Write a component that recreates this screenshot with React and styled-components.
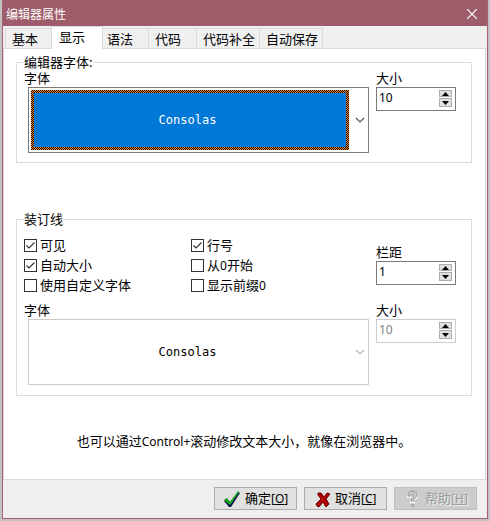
import React, { useId, useState } from "react";
import styled, { createGlobalStyle, css } from "styled-components";

const GlobalStyle = createGlobalStyle`
  * { box-sizing: border-box; }
  body {
    margin: 0;
    background: #c2c2c2;
    color: #000;
    font: 13px/16px "Noto Sans CJK SC", sans-serif;
  }
  button, input, select { font: inherit; color: inherit; }
`;

const Dialog = styled.main`
  display: flex;
  flex-direction: column;
  min-height: calc(100vh - 2px);
  margin: 0 2px 2px;
  border: 1px solid #a8606e;
  border-top-color: #a4606e;
  background: #efefef;
`;

const TitleBar = styled.header`
  display: flex;
  align-items: center;
  justify-content: space-between;
  height: 25px;
  padding-left: 3px;
  background: #9e5c6a;
  color: #fff;
`;

const Title = styled.h1`
  margin: 0;
  font-size: 12px;
  font-weight: 400;
`;

const CloseButton = styled.button`
  display: grid;
  place-items: center;
  width: 30px;
  height: 24px;
  padding: 0;
  border: 0;
  background: none;
`;

const TabList = styled.div`
  display: flex;
  align-items: flex-end;
  height: 22px;
  padding-left: 2px;
`;

const Tab = styled.button`
  height: 20px;
  min-width: 48px;
  padding: 0 4px 0 6px;
  border: 1px solid #dadada;
  border-width: 1px 0 0 1px;
  background: #f0f0f0;
  text-align: left;
  line-height: 18px;
  white-space: nowrap;
  &:last-child { border-right-width: 1px; }
  ${(p) => p.$active && css`
    z-index: 1;
    height: 23px;
    min-width: 52px;
    margin: 0 -3px -1px -2px;
    padding-left: 7px;
    padding-bottom: 3px;
    border-right-width: 1px;
    background: #fff;
  `}
`;

const Panel = styled.section`
  flex: 1;
  margin-right: 1px;
  padding: 5px 13px 16px 12px;
  border: 1px solid #dadada;
  background: #fff;
`;

const Group = styled.fieldset`
  min-width: 0;
  margin: 0 0 ${(p) => p.$after || 0}px;
  padding: ${(p) => p.$top || 0}px 15px ${(p) => p.$bottom}px 7px;
  border: 1px solid #dcdcdc;
`;

const Legend = styled.legend`
  padding: 0;
  height: 16px;
`;

const Columns = styled.div`
  display: grid;
  grid-template-columns: minmax(0, 1fr) 80px;
  gap: 7px;
`;

const Field = styled.div`
  padding-top: ${(p) => p.$top || 0}px;
`;

const FieldLabel = styled.label`
  display: block;
  margin-bottom: 1px;
`;

const Combo = styled.div`
  display: flex;
  height: 66px;
  margin-left: 4px;
  padding: 2px 0 2px 2px;
  border: 1px solid ${(p) => (p.$off ? "#ccc" : "#7a7a7a")};
  background: #fff;
  color: ${(p) => (p.$off ? "#b8b8b8" : "#555")};
`;

const ComboSelect = styled.select`
  appearance: none;
  flex: 1;
  min-width: 0;
  padding: 0 5px 0 0;
  border: 3px solid transparent;
  border-radius: 0;
  outline: 0;
  color: #fff;
  font: 12px/16px "DejaVu Sans Mono", monospace;
  text-align: center;
  text-align-last: center;
  background:
    linear-gradient(#0078d7, #0078d7) padding-box,
    repeating-conic-gradient(#000 0 25%, #ff8728 0 50%) 0 0 / 2px 2px border-box;
  &:disabled {
    background: #fff;
    color: #000;
    opacity: 1;
  }
`;

const ComboArrow = styled.svg`
  flex: none;
  align-self: center;
  width: 19px;
  height: 8px;
`;

const SpinBox = styled.div`
  display: flex;
  height: 24px;
  padding: 2px 3px 2px 2px;
  border: 1px solid ${(p) => (p.$off ? "#ccc" : "#7a7a7a")};
  background: #fff;
`;

const SpinInput = styled.input`
  flex: 1;
  min-width: 0;
  height: 16px;
  padding: 0;
  border: 0;
  outline: 0;
  background: none;
  font: 12px/16px "Noto Sans", sans-serif;
  &:disabled { color: #808080; }
`;

const SpinButtons = styled.div`
  display: grid;
  grid-template-rows: 7px 9px;
  gap: 1px;
  width: 13px;
`;

const SpinButton = styled.button`
  display: grid;
  place-items: center;
  padding: 0;
  border: 1px solid #adadad;
  background: #e1e1e1;
`;

const CheckGrid = styled.div`
  display: grid;
  grid-template-columns: 167px 1fr;
  grid-auto-rows: 20px;
`;

const CheckLabel = styled.label`
  display: flex;
  align-items: center;
  gap: 3px;
`;

const CheckBox = styled.input`
  appearance: none;
  width: 13px;
  height: 13px;
  margin: 0;
  border: 1px solid #333;
  background: #fff;
  &:checked {
    background: #fff url("data:image/svg+xml,%3Csvg xmlns='http://www.w3.org/2000/svg' viewBox='0 0 11 11'%3E%3Cpath d='M1.5 5.5 4 8 9.5 2.5' fill='none' stroke='%23333' stroke-width='1.2'/%3E%3C/svg%3E");
  }
`;

const Latin = styled.span`
  font: 12px/16px "Noto Sans", sans-serif;
`;

const Hint = styled.p`
  margin: 0;
  text-align: center;
`;

const Footer = styled.footer`
  display: flex;
  justify-content: flex-end;
  gap: 7px;
  padding: 7px 10px 8px;
`;

const ActionButton = styled.button`
  display: flex;
  align-items: center;
  gap: 4px;
  width: 83px;
  height: 23px;
  padding: 0 0 0 8px;
  border: 1px solid #adadad;
  background: #e1e1e1;
  white-space: nowrap;
  &:disabled {
    border-color: #bfbfbf;
    background: #ccc;
    color: #9a9a9a;
    text-shadow: 1px 1px #eee;
  }
`;

const ActionIcon = styled.svg`
  flex: none;
  width: 18px;
  height: 18px;
`;

function FontCombo({ id, disabled }) {
  return (
    <Combo $off={disabled}>
      <ComboSelect id={id} disabled={disabled} defaultValue="Consolas">
        <option>Consolas</option>
      </ComboSelect>
      <ComboArrow viewBox="0 0 19 8" aria-hidden="true">
        <path d="M7 2l4 4 4-4" fill="none" stroke="currentColor" strokeWidth="1.2" />
      </ComboArrow>
    </Combo>
  );
}

function FontField({ disabled }) {
  const id = useId();
  return (
    <Field>
      <FieldLabel htmlFor={id}>字体</FieldLabel>
      <FontCombo id={id} disabled={disabled} />
    </Field>
  );
}

function SpinField({ label, initial, disabled, top }) {
  const id = useId();
  const [value, setValue] = useState(initial);
  const step = (n) => setValue((v) => Math.max(0, Number(v) + n));
  return (
    <Field $top={top}>
      <FieldLabel htmlFor={id}>{label}</FieldLabel>
      <SpinBox $off={disabled}>
        <SpinInput id={id} value={value} disabled={disabled} onChange={(e) => setValue(e.target.value)} />
        <SpinButtons>
          <SpinButton type="button" aria-label="增加" disabled={disabled} onClick={() => step(1)}>
            <svg width="7" height="4" viewBox="0 0 7 4"><path d="M0 4 3.5 0 7 4z" /></svg>
          </SpinButton>
          <SpinButton type="button" aria-label="减少" disabled={disabled} onClick={() => step(-1)}>
            <svg width="7" height="4" viewBox="0 0 7 4"><path d="M0 0 3.5 4 7 0z" /></svg>
          </SpinButton>
        </SpinButtons>
      </SpinBox>
    </Field>
  );
}

function Check({ checked, children }) {
  return (
    <CheckLabel>
      <CheckBox type="checkbox" defaultChecked={checked} />
      <span>{children}</span>
    </CheckLabel>
  );
}

function Shortcut({ letter }) {
  return <Latin>[<u>{letter}</u>]</Latin>;
}

const tabs = ["基本", "显示", "语法", "代码", "代码补全", "自动保存"];

export default function App() {
  const [active, setActive] = useState("显示");
  return (
    <>
      <GlobalStyle />
      <Dialog>
        <TitleBar>
          <Title>编辑器属性</Title>
          <CloseButton type="button" aria-label="关闭">
            <svg width="10" height="10" viewBox="0 0 10 10">
              <path d="M0 0l10 10M10 0L0 10" stroke="#fff" strokeWidth="1.2" />
            </svg>
          </CloseButton>
        </TitleBar>
        <TabList role="tablist">
          {tabs.map((t) => (
            <Tab key={t} type="button" role="tab" aria-selected={t === active} $active={t === active} onClick={() => setActive(t)}>
              {t}
            </Tab>
          ))}
        </TabList>
        <Panel role="tabpanel">
          <Group $bottom={9} $after={48}>
            <Legend>编辑器字体:</Legend>
            <Columns>
              <FontField />
              <SpinField label="大小" initial={10} />
            </Columns>
          </Group>
          <Group $top={8} $bottom={10} $after={37}>
            <Legend>装订线</Legend>
            <Columns>
              <CheckGrid>
                <Check checked>可见</Check>
                <Check checked>行号</Check>
                <Check checked>自动大小</Check>
                <Check>从<Latin>0</Latin>开始</Check>
                <Check>使用自定义字体</Check>
                <Check>显示前缀<Latin>0</Latin></Check>
              </CheckGrid>
              <SpinField label="栏距" initial={1} top={9} />
              <FontField disabled />
              <SpinField label="大小" initial={10} disabled />
            </Columns>
          </Group>
          <Hint>也可以通过<Latin>Control+</Latin>滚动修改文本大小，就像在浏览器中。</Hint>
        </Panel>
        <Footer>
          <ActionButton type="button">
            <ActionIcon viewBox="0 0 18 18" aria-hidden="true">
              <path d="M1 11l3-2 3 3L15 2l2 1L8 17H6z" fill="#101850" />
              <path d="M1 10l3-2 3 4L15 1l1 1L7 15z" fill="#0a9a14" />
              <path d="M3 10l4 4L15 2" fill="none" stroke="#26c52c" />
            </ActionIcon>
            <span>确定<Shortcut letter="O" /></span>
          </ActionButton>
          <ActionButton type="button">
            <ActionIcon viewBox="0 0 18 18" aria-hidden="true">
              <path d="M5 3h3l3 4 3-4 3 1-4 5 3 5-3 3-3-5-4 5-2-1-1-2 5-5-3-4z" fill="#a00000" stroke="#6c0000" />
              <path d="M6 4l8 11M15 4L5 15" stroke="#bd0808" strokeWidth="1.5" />
            </ActionIcon>
            <span>取消<Shortcut letter="C" /></span>
          </ActionButton>
          <ActionButton type="button" disabled>
            <ActionIcon viewBox="0 0 18 18" fill="none" aria-hidden="true">
              <path d="M5 7V4q1-2 4-2 5 0 5 4 0 2-3 4v2H8V9q3-2 3-3 0-2-2-2-1 0-1 3zM8 14h3v3H8z" stroke="#f5f5f5" strokeWidth="2" />
              <path d="M5 6V4q1-3 4-3 5 0 5 4 0 2-3 4v2H8V9q3-2 3-4 0-1-2-1-1 0-1 2zM8 14h3v3H8z" fill="#ccc" stroke="#969696" strokeWidth="1" />
            </ActionIcon>
            <span>帮助<Shortcut letter="H" /></span>
          </ActionButton>
        </Footer>
      </Dialog>
    </>
  );
}
